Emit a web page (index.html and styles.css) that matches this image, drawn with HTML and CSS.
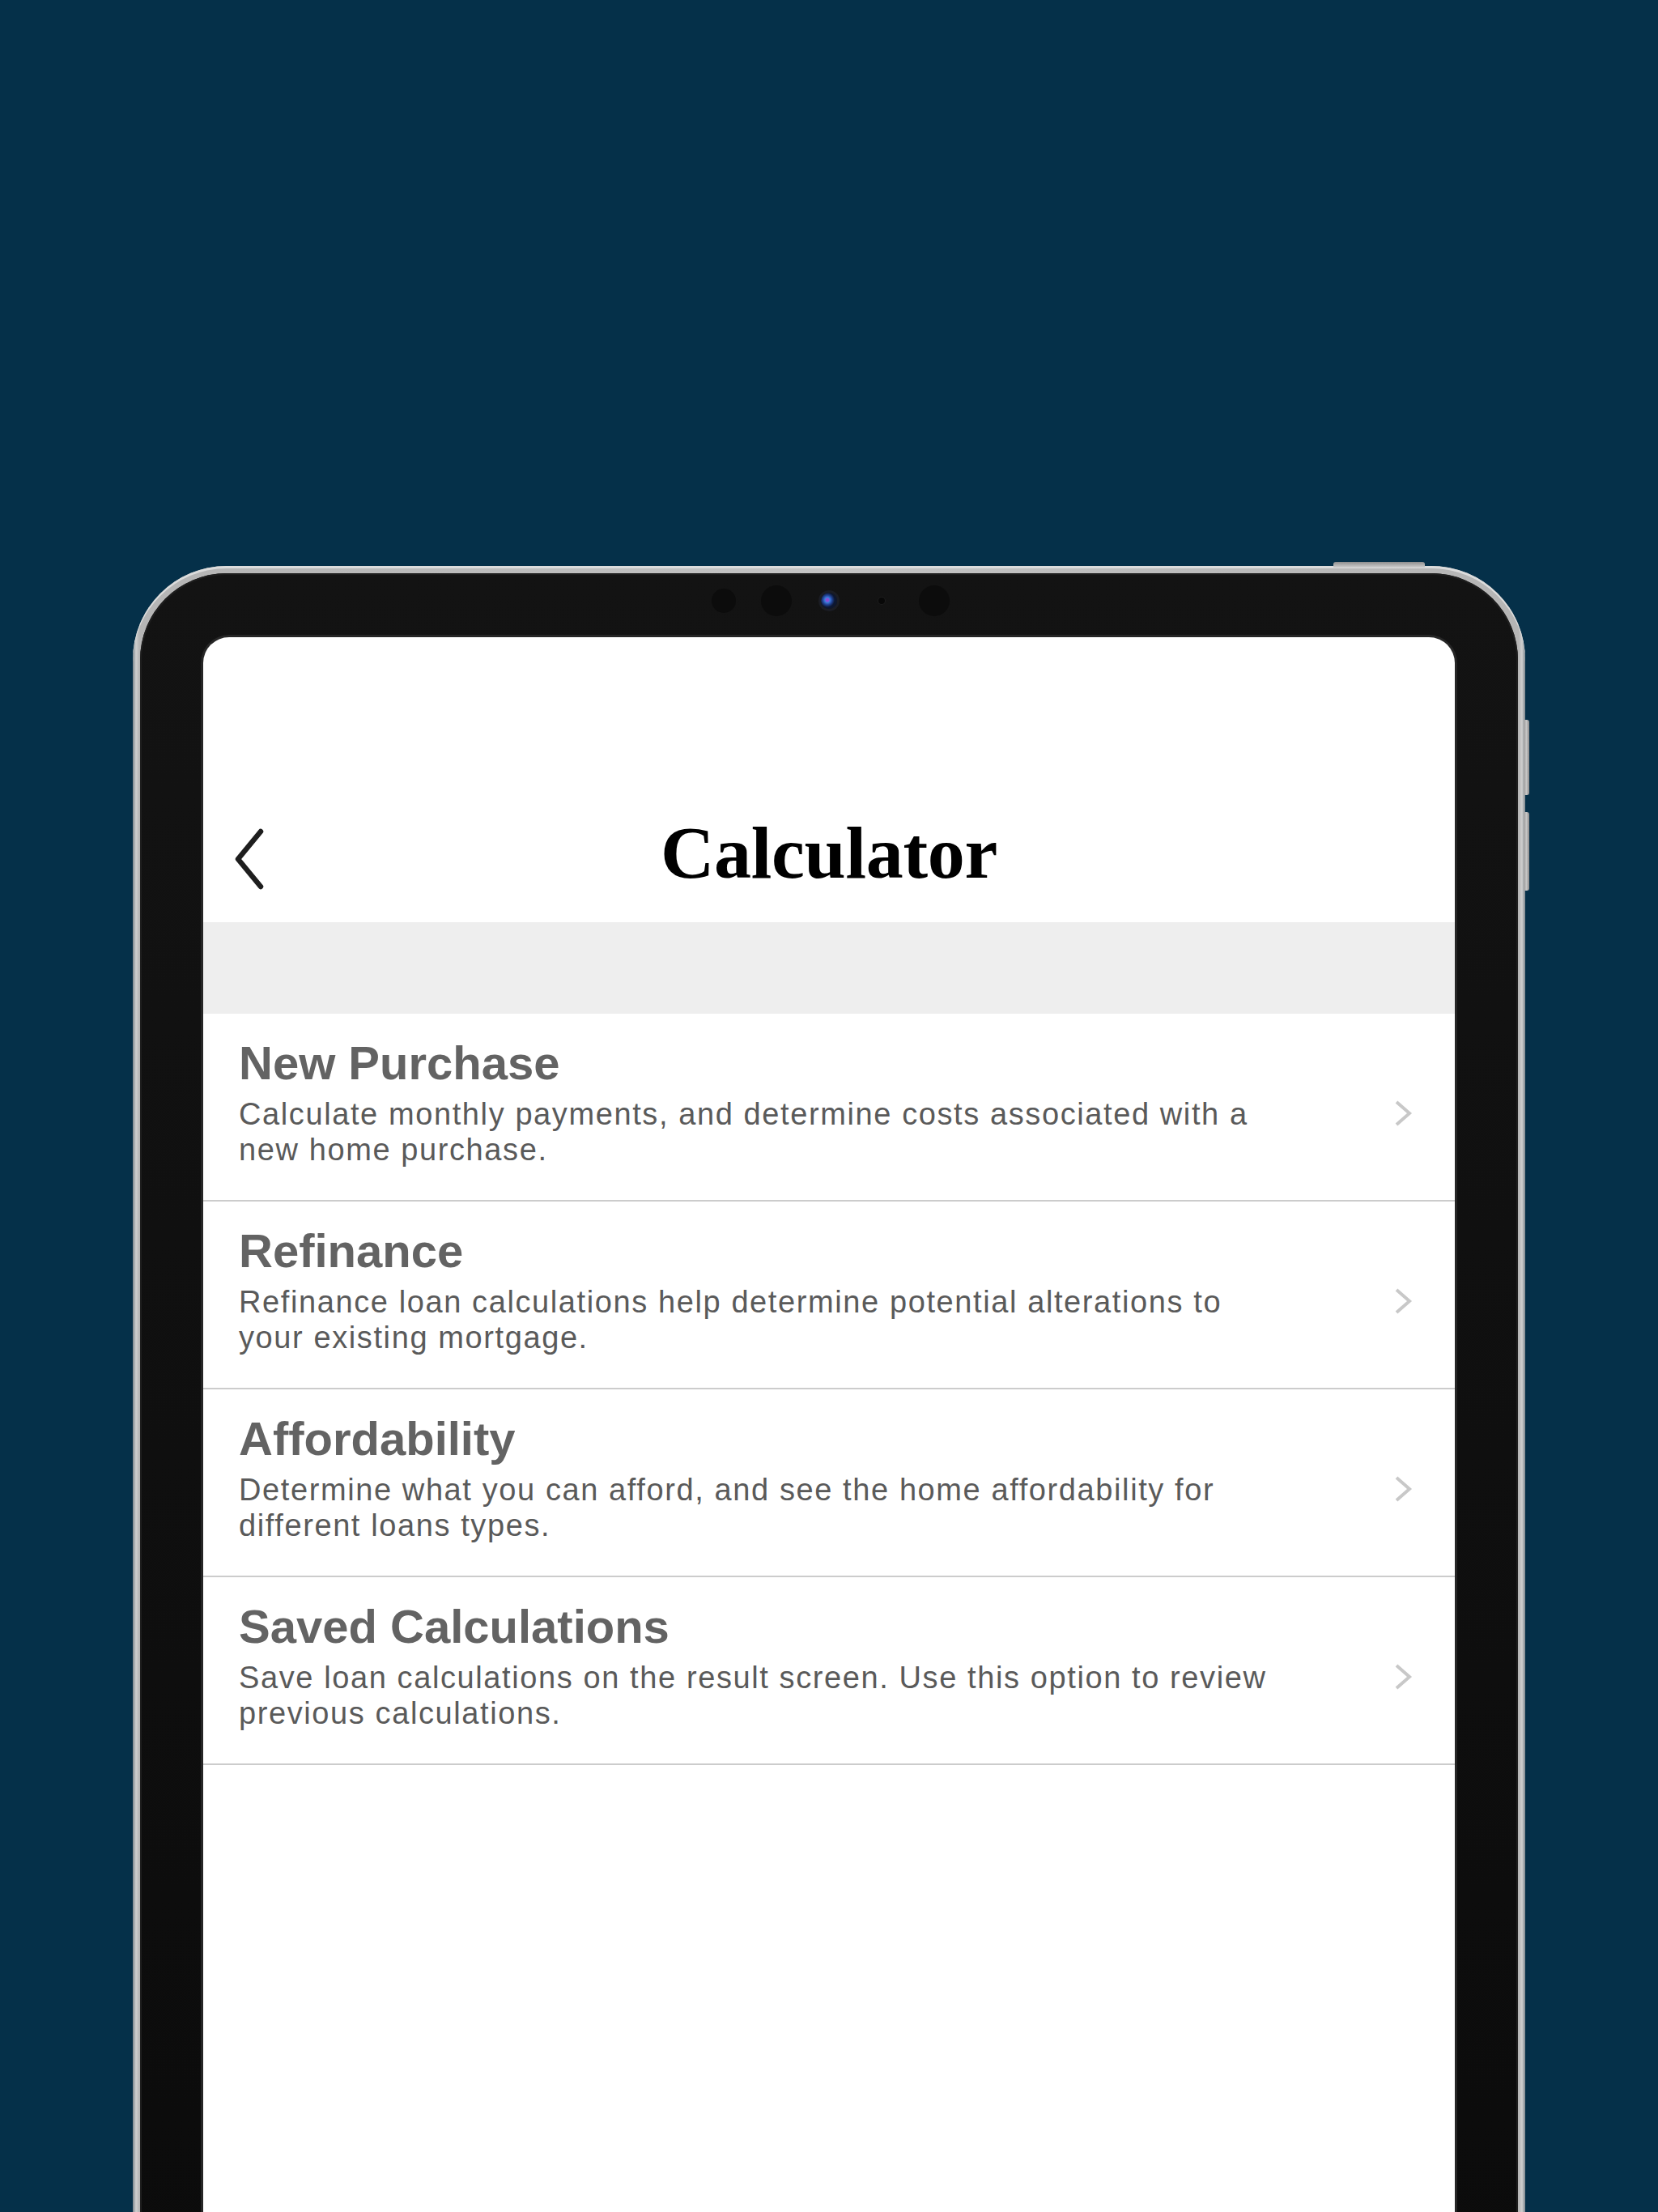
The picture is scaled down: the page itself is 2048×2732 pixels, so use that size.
FILE: index.html
```html
<!DOCTYPE html>
<html lang="en">
<head>
<meta charset="utf-8">
<title>Calculator</title>
<link rel="stylesheet" href="styles.css">
</head>
<body>
<div class="page">
  <div class="device">
    <span class="btn-top"></span>
    <span class="btn-side btn-side-1"></span>
    <span class="btn-side btn-side-2"></span>
    <div class="bezel">
      <div class="sensors">
        <span class="cell"><span class="dot dot-s"></span></span>
        <span class="cell"><span class="dot dot-l"></span></span>
        <span class="cell"><span class="lens"></span></span>
        <span class="cell"><span class="dot dot-xs"></span></span>
        <span class="cell"><span class="dot dot-l"></span></span>
      </div>
      <div class="screen">
        <header class="header">
          <div class="nav">
            <div class="nav-left">
              <svg class="back" width="38" height="76" viewBox="0 0 38 76" aria-hidden="true">
                <polyline points="33,4 5,38 33,72" fill="none" stroke="#1e1e1e" stroke-width="6.5" stroke-linecap="round" stroke-linejoin="round"/>
              </svg>
            </div>
            <h1 class="title">Calculator</h1>
            <div class="nav-right"></div>
          </div>
        </header>
        <div class="band"></div>
        <ul class="list">
          <li class="row">
            <div class="row-text">
              <div class="row-title">New Purchase</div>
              <div class="row-desc">Calculate monthly payments, and determine costs associated with a new home purchase.</div>
            </div>
            <svg class="chev" width="24" height="34" viewBox="0 0 24 34" aria-hidden="true"><polyline points="4,3 20,17 4,31" fill="none" stroke="#c8c8c8" stroke-width="4"/></svg>
          </li>
          <li class="row">
            <div class="row-text">
              <div class="row-title">Refinance</div>
              <div class="row-desc">Refinance loan calculations help determine potential alterations to your existing mortgage.</div>
            </div>
            <svg class="chev" width="24" height="34" viewBox="0 0 24 34" aria-hidden="true"><polyline points="4,3 20,17 4,31" fill="none" stroke="#c8c8c8" stroke-width="4"/></svg>
          </li>
          <li class="row">
            <div class="row-text">
              <div class="row-title">Affordability</div>
              <div class="row-desc">Determine what you can afford, and see the home affordability for different loans types.</div>
            </div>
            <svg class="chev" width="24" height="34" viewBox="0 0 24 34" aria-hidden="true"><polyline points="4,3 20,17 4,31" fill="none" stroke="#c8c8c8" stroke-width="4"/></svg>
          </li>
          <li class="row">
            <div class="row-text">
              <div class="row-title">Saved Calculations</div>
              <div class="row-desc">Save loan calculations on the result screen. Use this option to review previous calculations.</div>
            </div>
            <svg class="chev" width="24" height="34" viewBox="0 0 24 34" aria-hidden="true"><polyline points="4,3 20,17 4,31" fill="none" stroke="#c8c8c8" stroke-width="4"/></svg>
          </li>
        </ul>
      </div>
    </div>
  </div>
</div>
</body>
</html>
```

FILE: styles.css
```css
* { box-sizing: border-box; }

html, body {
  margin: 0;
  padding: 0;
  background: #053049;
}

.page {
  width: 2048px;
  height: 2732px;
  overflow: hidden;
  padding: 699px 0 0 164px;
  background: #053049;
}

.device {
  position: relative;
  width: 1720px;
  height: 2200px;
  padding: 9px;
  border-radius: 116px;
  background: linear-gradient(90deg, #7d878d 0px, #cfcfcf 4px, #b5b5b5 8px, #c4c4c4 50%, #b5b5b5 calc(100% - 8px), #cfcfcf calc(100% - 4px), #7d878d 100%);
  box-shadow: inset 0 3px 0 #dcdcdc;
}

.btn-top {
  position: absolute;
  top: -5px;
  left: 1483px;
  width: 113px;
  height: 7px;
  border-radius: 3px 3px 0 0;
  background: linear-gradient(#8e8e8e, #cfcfcf);
}

.btn-side {
  position: absolute;
  right: -5px;
  width: 7px;
  border-radius: 0 3px 3px 0;
  background: linear-gradient(90deg, #9a9a9a, #c6c6c6 50%, #8a8a8a);
}
.btn-side-1 { top: 190px; height: 93px; }
.btn-side-2 { top: 304px; height: 97px; }

.bezel {
  display: flex;
  flex-direction: column;
  height: 100%;
  padding: 0 78px;
  border-radius: 107px;
  background: linear-gradient(#131313, #0b0b0b);
  box-shadow: inset 0 0 0 2px #1e1e1e;
}

.sensors {
  height: 79px;
  padding-top: 15px;
  display: flex;
  justify-content: center;
  flex-shrink: 0;
}

.cell {
  width: 65px;
  height: 38px;
  display: flex;
  align-items: center;
  justify-content: center;
}

.dot {
  display: block;
  border-radius: 50%;
  background: #0c0c0c;
}
.dot-s { width: 30px; height: 30px; }
.dot-l { width: 38px; height: 38px; }
.dot-xs { width: 8px; height: 8px; background: #080808; box-shadow: 0 0 0 1px #1d1d1d; }

.lens {
  display: block;
  width: 20px;
  height: 20px;
  border-radius: 50%;
  background: radial-gradient(circle at 40% 45%, #8e4fd6 0 2px, #3d7fe0 3px, #1f3f8f 6px, #0d1730 9px);
  box-shadow: 0 0 0 3px #1b1d24;
}

.screen {
  flex: 1;
  background: #ffffff;
  border-radius: 32px 32px 0 0;
  box-shadow: 0 0 0 3px #262626;
  overflow: hidden;
}

.header {
  height: 352px;
  padding-top: 220px;
}

.nav {
  height: 90px;
  display: grid;
  grid-template-columns: 1fr auto 1fr;
  align-items: center;
}

.nav-left {
  padding-left: 38px;
  display: flex;
  align-items: center;
}

.back { display: block; margin-top: 16px; }

.title {
  margin: 0;
  font-family: "Liberation Serif", "Times New Roman", serif;
  font-weight: 700;
  font-size: 92px;
  line-height: 90px;
  color: #000000;
  letter-spacing: -0.3px;
}

.band {
  height: 113px;
  background: #eeeeee;
}

.list {
  list-style: none;
  margin: 0;
  padding: 0;
}

.row {
  height: 232px;
  border-bottom: 2px solid #cccccc;
  padding: 28px 0 0 44px;
  display: flex;
  align-items: flex-start;
  justify-content: space-between;
}

.row-text {
  width: 1292px;
}

.row-title {
  font-family: "Liberation Sans", Arial, sans-serif;
  font-weight: 700;
  font-size: 58px;
  line-height: 66px;
  color: #636363;
}

.row-desc {
  margin-top: 8px;
  font-family: "Liberation Sans", Arial, sans-serif;
  font-size: 38px;
  line-height: 44px;
  letter-spacing: 1.6px;
  color: #5a5a5a;
}

.chev {
  display: block;
  flex-shrink: 0;
  margin: 78px 52px 0 0;
}
```
